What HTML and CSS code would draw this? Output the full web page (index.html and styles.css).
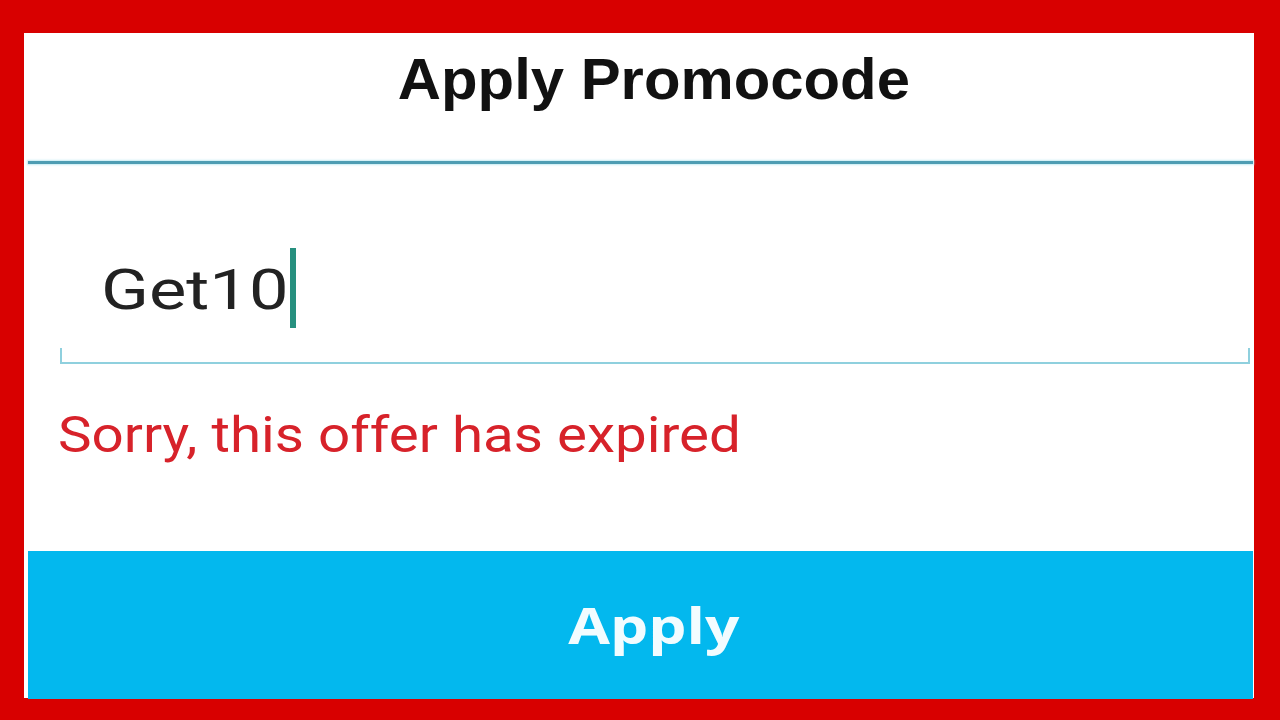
FILE: index.html
```html
<!DOCTYPE html>
<html lang="en">
<head>
<meta charset="utf-8">
<title>Apply Promocode</title>
<link rel="stylesheet" href="styles.css">
</head>
<body>
<div class="frame">
  <div class="panel">
    <header class="header">
      <h1 class="title">Apply Promocode</h1>
    </header>
    <div class="divider"></div>
    <div class="field">
      <div class="field-value"><span class="value-text">Get10</span><span class="cursor"></span></div>
      <div class="field-line"></div>
    </div>
    <p class="error"><span class="error-text">Sorry, this offer has expired</span></p>
    <div class="spacer"></div>
    <button class="apply-btn"><span class="apply-label">Apply</span></button>
  </div>
</div>
</body>
</html>
```

FILE: styles.css
```css
* { box-sizing: border-box; }
html, body {
  margin: 0;
  padding: 0;
  width: 1280px;
  height: 720px;
  overflow: hidden;
  background: #d80000;
}
.frame {
  padding: 33px 26px 22px 24px;
  height: 720px;
}
.panel {
  background: #ffffff;
  height: 665px;
  display: flex;
  flex-direction: column;
}
.header {
  height: 128px;
  display: flex;
  justify-content: center;
  padding-left: 30px;
  padding-top: 18px;
}
.title {
  display: inline-block;
  margin: 0;
  font-family: "Liberation Sans", Arial, sans-serif;
  font-weight: bold;
  font-size: 57px;
  line-height: 56px;
  color: #111111;
  transform: scaleX(1.05);
}
.divider {
  height: 3px;
  margin: 0 1px 0 4px;
  background: #4e9db3;
  box-shadow: 0 0 2px 1px #c6ecf3;
}
.field {
  margin: 0 4px 0 36px;
  padding-top: 96px;
}
.field-value {
  display: flex;
  align-items: center;
  padding-left: 41px;
  height: 56px;
}
.value-text {
  display: inline-block;
  font-family: Roboto, "Noto Sans", sans-serif;
  font-size: 55px;
  line-height: 56px;
  color: #222222;
  transform: scaleX(1.28);
  transform-origin: left center;
  margin-right: 41px;
  position: relative;
  top: 2px;
}
.cursor {
  width: 6px;
  height: 80px;
  margin-left: 2px;
  background: #27907f;
}
.field-line {
  margin-top: 32px;
  height: 16px;
  border: 2px solid #8fd0de;
  border-top: none;
}
.error {
  margin: 46px 0 0 34px;
  font-family: Roboto, "Noto Sans", sans-serif;
  font-size: 50px;
  line-height: 50px;
  color: #d7222a;
}
.error-text {
  display: inline-block;
  transform: scaleX(1.13);
  transform-origin: left center;
}
.spacer { flex: 1; }
.apply-btn {
  display: flex;
  justify-content: center;
  align-items: center;
  height: 148px;
  margin: 0 1px -1px 4px;
  padding: 0 0 0 26px;
  border: none;
  background: #03b8ee;
  cursor: pointer;
}
.apply-label {
  display: inline-block;
  font-family: "Open Sans", sans-serif;
  font-weight: bold;
  font-size: 50px;
  color: #f2fcff;
  transform: scaleX(1.21);
}
```
